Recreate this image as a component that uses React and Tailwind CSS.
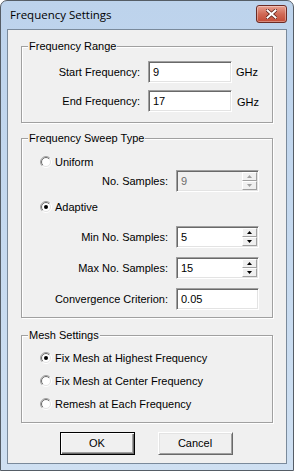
import React from "react";

const FONT = { fontFamily: '"Liberation Sans", Arial, sans-serif' };

function Radio({ checked }) {
  return (
    <svg width="12" height="12" viewBox="0 0 12 12" className="shrink-0">
      <defs>
        <linearGradient id="ro" x1="0" y1="0" x2="1" y2="1">
          <stop offset="0.45" stopColor="#a0a0a0" />
          <stop offset="0.55" stopColor="#ffffff" />
        </linearGradient>
        <linearGradient id="ri" x1="0" y1="0" x2="1" y2="1">
          <stop offset="0.45" stopColor="#696969" />
          <stop offset="0.55" stopColor="#e3e3e3" />
        </linearGradient>
      </defs>
      <circle cx="6" cy="6" r="5.5" fill="none" stroke="url(#ro)" strokeWidth="1" />
      <circle cx="6" cy="6" r="4.5" fill="#ffffff" stroke="url(#ri)" strokeWidth="1" />
      {checked && <circle cx="6" cy="6" r="2" fill="#000000" />}
    </svg>
  );
}

function RadioRow({ checked, label }) {
  return (
    <div className="flex h-[14px] items-center gap-[3px]">
      <Radio checked={checked} />
      <span className="text-[11px] leading-none text-black">{label}</span>
    </div>
  );
}

function SpinBtn({ up, disabled }) {
  const c = disabled ? "#a0a0a0" : "#000000";
  return (
    <div className="flex h-[9px] w-[15px] items-center justify-center bg-[#f0f0f0] border border-t-white border-l-white border-b-[#a0a0a0] border-r-[#a0a0a0]">
      <svg width="5" height="3" viewBox="0 0 5 3">
        {up ? <polygon points="2.5,0 5,3 0,3" fill={c} /> : <polygon points="0,0 5,0 2.5,3" fill={c} />}
      </svg>
    </div>
  );
}

function Field({ value, width = "w-[84px]", spin, disabled }) {
  return (
    <div
      className={`flex h-[22px] ${width} items-stretch border border-t-[#a0a0a0] border-l-[#a0a0a0] border-b-white border-r-white shadow-[inset_1px_1px_0_#696969,inset_-1px_-1px_0_#e3e3e3] ${disabled ? "bg-[#f0f0f0]" : "bg-white"}`}
    >
      <div className={`flex flex-1 items-center pl-[4px] pt-[1px] text-[11px] ${disabled ? "text-[#6d6d6d]" : "text-black"}`}>
        {value}
      </div>
      {spin && (
        <div className="flex flex-col pt-[1px] pr-[1px] pb-[1px]">
          <SpinBtn up disabled={disabled} />
          <SpinBtn disabled={disabled} />
        </div>
      )}
    </div>
  );
}

function Group({ title, className, children }) {
  return (
    <div className={`relative mx-[13px] border border-[#a0a0a0] shadow-[1px_1px_0_#ffffff,inset_1px_1px_0_#ffffff] ${className}`}>
      <span className="absolute left-[6px] top-[-8px] bg-[#f0f0f0] px-[1px] text-[11px] leading-[14px] text-black">
        {title}
      </span>
      {children}
    </div>
  );
}

function LabeledRow({ label, labelW, children }) {
  return (
    <div className="flex h-[22px] items-center">
      <div className={`${labelW} text-right text-[11px] text-black`}>{label}</div>
      <div className="ml-[8px] flex items-center">{children}</div>
    </div>
  );
}

function Button({ label, def }) {
  return (
    <div
      className={`flex h-[23px] w-[75px] items-center justify-center bg-[#f0f0f0] text-[11px] text-black ${
        def
          ? "border border-[#000000] shadow-[inset_1px_1px_0_#ffffff,inset_-1px_-1px_0_#696969,inset_-2px_-2px_0_#a0a0a0]"
          : "border border-t-white border-l-white border-b-[#696969] border-r-[#696969] shadow-[inset_1px_1px_0_#e3e3e3,inset_-1px_-1px_0_#a0a0a0]"
      }`}
    >
      {label}
    </div>
  );
}

export default function App() {
  return (
    <div className="h-[471px] w-[294px] bg-white" style={FONT}>
      <div className="flex h-full flex-col rounded-t-[7px] border border-[#555d66] bg-gradient-to-b from-[#bdd3ec] via-[#c5d9ef] to-[#cfe0f2] px-[6px] pb-[6px]">
        <div className="flex h-[28px] items-center justify-between pl-[3px] pr-[0px]">
          <span
            className="text-[11.5px] text-black"
            style={{ fontFamily: '"Segoe UI", "Open Sans", "Liberation Sans", sans-serif' }}
          >
            Frequency Settings
          </span>
          <div className="mt-[-2px] flex h-[18px] w-[31px] items-center justify-center rounded-[3px] border border-[#6b2b25] bg-gradient-to-b from-[#e8a091] via-[#d06a56] to-[#c34a35] shadow-[inset_0_0_0_1px_rgba(255,255,255,0.35)]">
            <svg width="11" height="10" viewBox="0 0 11 10">
              <path
                d="M1.5 1.5 L9.5 8.5 M9.5 1.5 L1.5 8.5"
                stroke="#5a1f18"
                strokeWidth="3.6"
                strokeLinecap="square"
              />
              <path
                d="M1.5 1.5 L9.5 8.5 M9.5 1.5 L1.5 8.5"
                stroke="#ffffff"
                strokeWidth="2"
                strokeLinecap="square"
              />
            </svg>
          </div>
        </div>
        <div className="flex flex-1 flex-col border border-[#7a8a9b] bg-[#f0f0f0]">
          {/* Frequency Range */}
          <Group title="Frequency Range" className="mt-[16px] h-[77px] pt-[14px]">
            <div className="flex flex-col gap-[7px]">
              <LabeledRow label="Start Frequency:" labelW="w-[118px]">
                <Field value="9" width="w-[84px]" />
                <span className="ml-[4px] text-[11px] text-black">GHz</span>
              </LabeledRow>
              <LabeledRow label="End Frequency:" labelW="w-[118px]">
                <Field value="17" width="w-[84px]" />
                <span className="ml-[5px] mt-[2px] text-[11px] text-black">GHz</span>
              </LabeledRow>
            </div>
          </Group>

          {/* Frequency Sweep Type */}
          <Group title="Frequency Sweep Type" className="mt-[15px] h-[180px] pl-[18px] pt-[16px]">
            <RadioRow label="Uniform" />
            <div className="ml-[-18px] mt-[1px]">
              <LabeledRow label="No. Samples:" labelW="w-[146px]">
                <Field value="9" width="w-[83px]" spin disabled />
              </LabeledRow>
            </div>
            <div className="mt-[8px]">
              <RadioRow checked label="Adaptive" />
            </div>
            <div className="ml-[-18px] mt-[12px] flex flex-col gap-[9px]">
              <LabeledRow label="Min No. Samples:" labelW="w-[146px]">
                <Field value="5" width="w-[83px]" spin />
              </LabeledRow>
              <LabeledRow label="Max No. Samples:" labelW="w-[146px]">
                <Field value="15" width="w-[83px]" spin />
              </LabeledRow>
              <LabeledRow label="Convergence Criterion:" labelW="w-[146px]">
                <Field value="0.05" width="w-[83px]" />
              </LabeledRow>
            </div>
          </Group>

          {/* Mesh Settings */}
          <Group title="Mesh Settings" className="mt-[17px] h-[88px] pl-[18px] pt-[15px]">
            <div className="flex flex-col gap-[9px]">
              <RadioRow checked label="Fix Mesh at Highest Frequency" />
              <RadioRow label="Fix Mesh at Center Frequency" />
              <RadioRow label="Remesh at Each Frequency" />
            </div>
          </Group>

          <div className="mt-[9px] flex justify-center gap-[23px] pr-[2px]">
            <Button label="OK" def />
            <Button label="Cancel" />
          </div>
        </div>
      </div>
    </div>
  );
}
